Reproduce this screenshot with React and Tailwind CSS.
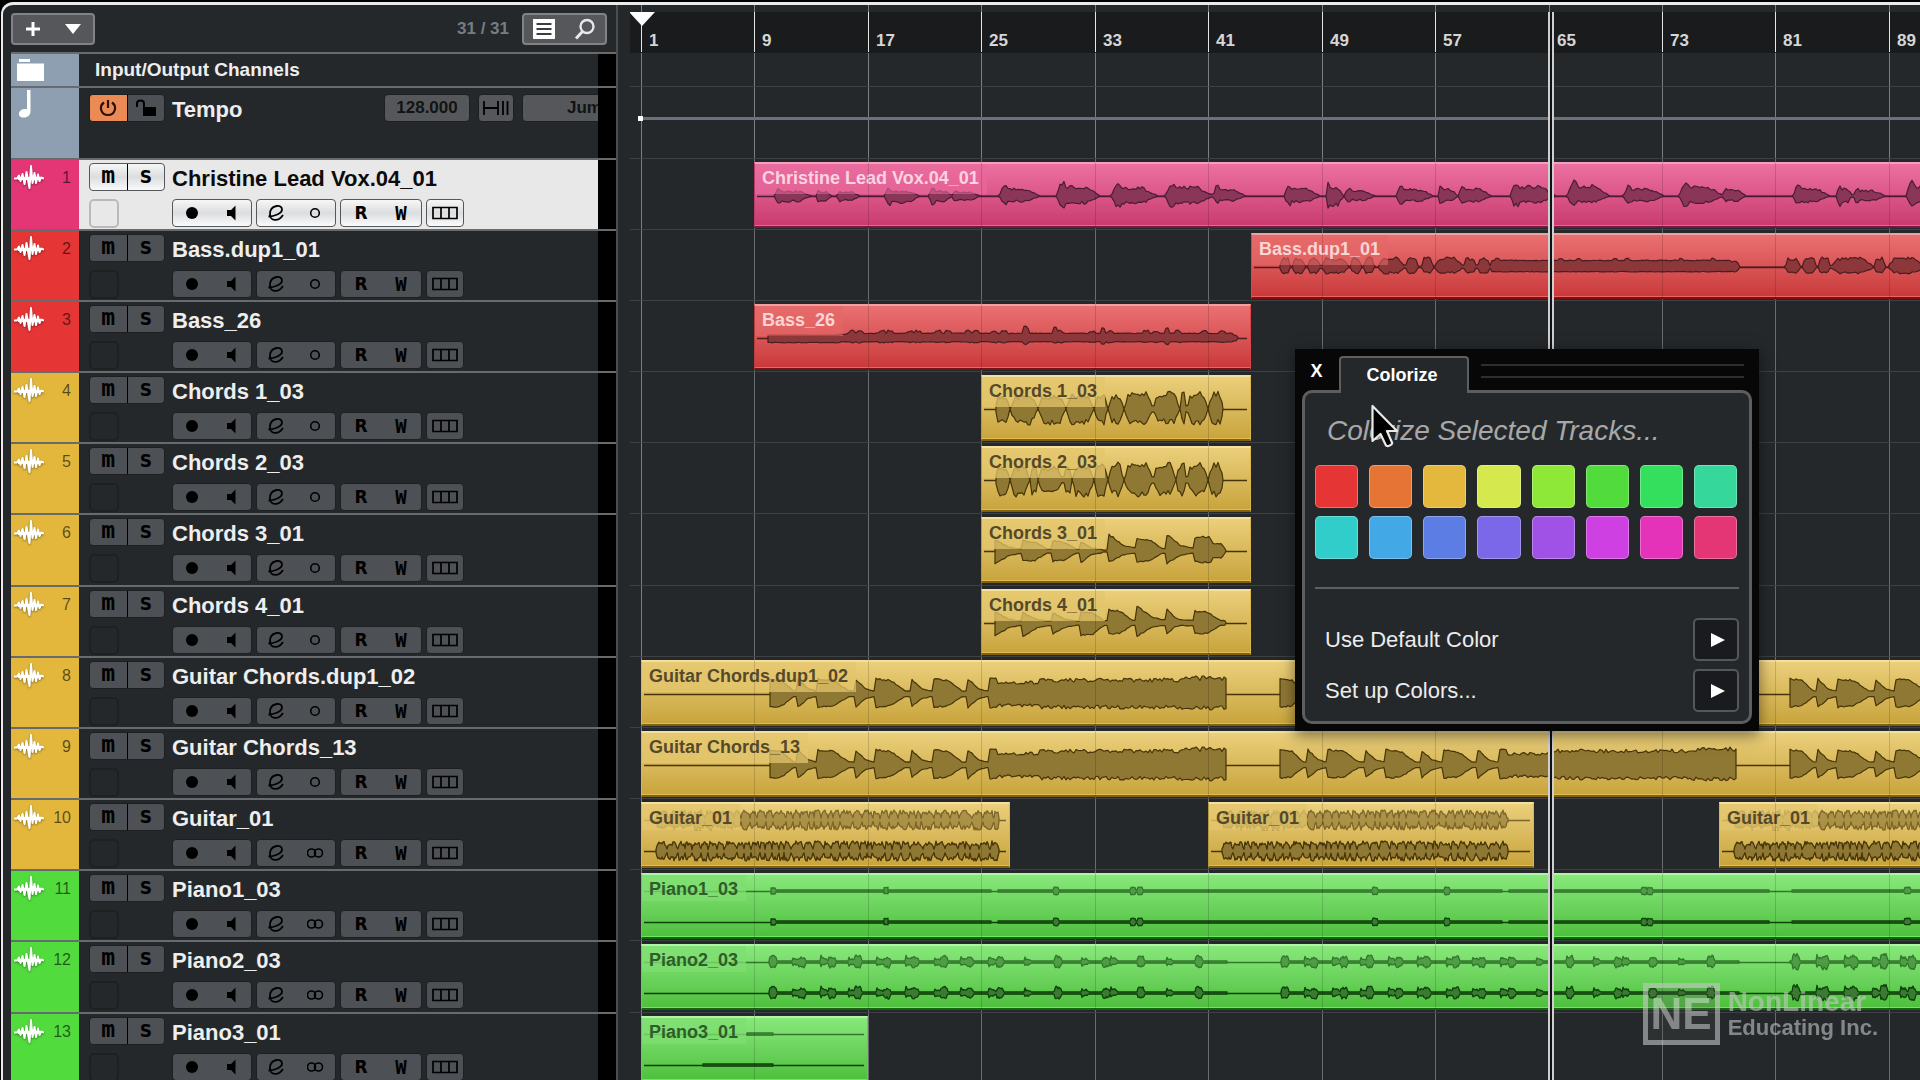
import { Fragment } from 'react';
import clsx from 'clsx';

const PX_PER_BAR = 14.18;
const ORIGIN = 11; // left margin of the arrange area before bar 1

const barX = (bar) => Math.round(ORIGIN + (bar - 1) * PX_PER_BAR);

const bars = [1, 9, 17, 25, 33, 41, 49, 57, 65, 73, 81, 89];

// Every sixth row takes one pixel more, in the list and in the lanes alike
const rowHeight = (i) => (i % 6 === 5 ? 'h-[72px]' : 'h-[71px]');

const palette = {
  pink: {
    strip: 'bg-[#e43675]',
    event: 'from-[#ec70a2] to-[#c93a6e] border-t-[#f29fc0] border-l-[#e0427d] border-r-[#e0427d] border-b-[#7e1440]',
    glow: 'border-[#f0619a]',
    label: 'text-[#fbd3e2]',
    veil: 'bg-[#e9699c]/60',
    wave: 'fill-[#8a3659] stroke-[#4b1c38]',
  },
  red: {
    strip: 'bg-[#e63535]',
    event: 'from-[#ea7072] to-[#c9383a] border-t-[#f0a09f] border-l-[#dd4646] border-r-[#dd4646] border-b-[#7c1113]',
    glow: 'border-[#ee6364]',
    label: 'text-[#fbd5d3]',
    veil: 'bg-[#e46767]/60',
    wave: 'fill-[#8c373a] stroke-[#4c1d20]',
  },
  yellow: {
    strip: 'bg-[#e2b73c]',
    event: 'from-[#ebcf7a] to-[#c8a43b] border-t-[#f3dfa0] border-l-[#d9b54c] border-r-[#d9b54c] border-b-[#83600c]',
    glow: 'border-[#e2bd55]',
    label: 'text-[#55492b]',
    veil: 'bg-[#e3c56c]/75',
    wave: 'fill-[#8f7734] stroke-[#463508]',
  },
  green: {
    strip: 'bg-[#52db3c]',
    event: 'from-[#88e87b] to-[#4ebf3d] border-t-[#b0f5a6] border-l-[#5ed24e] border-r-[#5ed24e] border-b-[#12670a]',
    glow: 'border-[#6fe75e]',
    label: 'text-[#2f5d2a]',
    veil: 'bg-[#7fde72]/75',
    wave: 'fill-[#3a7a33] stroke-[#0c4208]',
  },
};

// Repeatable noise, so the wave forms look the same on every render
const noise = (n) => {
  const v = Math.sin(n * 12.9898 + 4.1) * 43758.5453;
  return v - Math.floor(v);
};

const shapes = {
  pluck: (t) => (t < 0.5 ? 1 - t * 1.3 : Math.max(0.2, 0.35 - (t - 0.5) * 0.4)),
  swell: (t) => (t < 0.42 ? 1 - t * 0.25 : Math.max(0.2, 0.9 - (t - 0.42) * 1.7)),
  blob: (t) => Math.min(1, t * 5 + 0.25, (1 - t) * 4 + 0.2),
  voice: (t) => (t < 0.08 ? t * 9 : t < 0.22 ? 1 : t < 0.7 ? 0.68 : Math.max(0.1, 0.68 - (t - 0.7) * 2)),
  flat: () => 1,
};

// segment = [start, end, shape, up, down, roughness]
// Overlapping segments merge into one outline: the loudest one wins.
function wavePath(segs, mid, step) {
  const end = Math.max(...segs.map((s) => s[1]));
  const start = Math.min(...segs.map((s) => s[0]));
  const top = [];
  const bottom = [];
  for (let x = start; x <= end; x += step) {
    let a = 0;
    let b = 0;
    segs.forEach(([s, e, shape, up, down, rough = 0.15]) => {
      if (x < s || x > e) return;
      const k = shapes[shape]((x - s) / (e - s));
      a = Math.max(a, up * k * (1 - rough * noise(x + up)));
      b = Math.max(b, down * k * (1 - rough * noise(x * 1.7 + down)));
    });
    top.push(`${x} ${(mid - a).toFixed(1)}`);
    bottom.unshift(`${x} ${(mid + b).toFixed(1)}`);
  }
  return `M${start} ${mid}L${top.join('L')}L${end} ${mid}L${bottom.join('L')}Z`;
}

const voiceSegs = [
  [20, 56, 8, 9], [62, 77, 7, 8], [83, 105, 7, 7], [130, 165, 8, 11], [175, 198, 8, 9], [198, 225, 6, 7],
  [245, 285, 12, 9], [302, 345, 16, 12], [357, 402, 14, 12], [411, 458, 15, 12], [459, 490, 11, 8],
  [530, 565, 12, 10], [572, 589, 14, 16], [590, 620, 8, 7], [642, 678, 11, 9], [684, 703, 11, 9],
  [704, 736, 12, 9], [756, 800, 16, 11], [813, 854, 17, 10], [869, 909, 12, 9], [925, 968, 15, 11],
  [969, 991, 11, 8], [1039, 1074, 12, 10], [1083, 1098, 12, 11], [1099, 1130, 9, 7], [1152, 1190, 16, 11],
].map(([s, e, u, d]) => [s, e, 'voice', u, d, 0.35]);

const bassSegs = [
  ...[[29, 39], [42, 54], [57, 69], [71, 97], [100, 110], [113, 123], [128, 153], [155, 167], [171, 182], [184, 211],
    [213, 225], [227, 239], [535, 549], [552, 565], [568, 579], [581, 621], [624, 634], [638, 672]]
    .map(([s, e]) => [s, e, 'blob', 10, 7, 0.35]),
  [241, 480, 'flat', 7, 5, 0.12],
  [480, 488, 'blob', 6, 5, 0.1],
  ...[244, 308, 326, 362, 374, 428, 460].map((x) => [x, x + 4, 'flat', 9, 5, 0.1]),
];

const bass26Segs = [
  [14, 86, 'flat', 3, 5, 0.15],
  [86, 106, 'flat', 4, 4, 0.15],
  [94, 478, 'flat', 5, 4, 0.12],
  [476, 484, 'blob', 3, 3, 0.1],
  ...[98, 106, 128, 136, 156, 164, 184, 194, 214, 222, 240, 250, 306, 338, 356, 392, 402, 424, 450, 468]
    .map((x) => [x - 4, x + 4, 'blob', 8, 5, 0.25]),
  [268, 275, 'blob', 14, 7, 0.2],
  [298, 304, 'blob', 11, 5, 0.2],
  [346, 351, 'blob', 12, 7, 0.2],
  [410, 416, 'blob', 12, 7, 0.2],
];

const strum = (cuts, up, down) => cuts.slice(1).map((c, i) => [cuts[i] + 1, c - 1, 'blob', up + (i > 5 ? 3 : 0), down, 0.4]);
const chords1 = strum([14, 29, 57, 85, 113, 127, 143, 172, 199, 206, 227, 243], 15, 16);
const chords2 = strum([14, 29, 49, 57, 82, 91, 113, 127, 143, 172, 195, 206, 227, 243], 15, 17);

const chords3 = [
  [14, 42, 'pluck', 12, 14], [42, 71, 'swell', 11, 11], [71, 100, 'swell', 11, 11], [100, 120, 'pluck', 10, 12],
  [120, 128, 'flat', 1, 1], [128, 156, 'pluck', 18, 12], [156, 186, 'swell', 13, 12], [186, 213, 'pluck', 17, 13],
  [213, 228, 'flat', 15, 12], [228, 245, 'voice', 12, 11],
];
const chords4 = [
  [14, 42, 'pluck', 12, 14], [42, 71, 'pluck', 11, 14], [71, 100, 'pluck', 11, 12], [100, 128, 'swell', 12, 13],
  [128, 156, 'swell', 14, 12], [156, 185, 'pluck', 18, 14], [185, 203, 'pluck', 16, 12], [203, 213, 'flat', 3, 3],
  [213, 245, 'swell', 13, 12],
];

const riff = (at) => [
  ...[[0, 28, 'swell'], [28, 48, 'pluck'], [48, 85, 'swell'], [85, 106, 'pluck'], [106, 141, 'swell'],
    [141, 163, 'pluck'], [163, 198, 'swell'], [198, 219, 'pluck']]
    .map(([s, e, k]) => [at + s, at + e, k, 16, 14, 0.12]),
  [at + 219, at + 226, 'flat', 17, 14, 0.1],
  [at + 226, at + 270, 'flat', 13, 13, 0.25],
  [at + 270, at + 410, 'flat', 16, 15, 0.25],
  [at + 410, at + 456, 'flat', 18, 16, 0.25],
];
const guitarTakes = [riff(129), riff(639), riff(1149)];

const chug = (from, to, seed) => {
  const out = [];
  let x = from;
  let i = seed;
  while (x < to) {
    const w = 5 + Math.floor(noise(i++) * 5) * 2;
    out.push([x, Math.min(x + w, to), 'blob', 10, 10, 0.45]);
    x += w;
  }
  return out;
};

const bumps = (xs, up, down) =>
  xs.map((x, i) => [x - 3, x + 5, i % 2 ? 'voice' : 'blob', up - (i % 3), down - (i % 2), 0.4]);
const hits = [131, 154, 160, 182, 190, 210, 216, 238, 245, 267, 273, 296, 302, 322, 328, 350, 358, 386, 416, 443, 464, 472, 499, 528, 557];
const hitsB = hits.map((x) => x + 512).filter((x) => x < 1100);
const hitsC = [1154, 1178, 1183, 1206, 1212, 1234, 1242, 1262, 1270];
const piano2 = [
  [[130, 586, 'flat', 1, 1, 0], ...bumps(hits, 7, 6)],
  [[640, 1098, 'flat', 1, 1, 0], ...bumps(hitsB, 7, 6)],
  [[1149, 1290, 'flat', 1, 1, 0], ...bumps(hitsC, 9, 8)],
];
const dots = [245, 415, 492, 499, 734, 806, 1003, 1009];
const piano1 = [
  [[130, 350, 'flat', 1, 1, 0], [130, 134, 'flat', 3, 3, 0]],
  [[357, 861, 'flat', 1, 1, 0], ...dots.filter((x) => x > 357 && x < 861).map((x) => [x - 2, x + 2, 'flat', 4, 4, 0.2])],
  [[243, 247, 'flat', 4, 3, 0.2]],
  [[868, 1128, 'flat', 1, 1, 0], ...dots.filter((x) => x > 868).map((x) => [x - 2, x + 2, 'flat', 4, 4, 0.2])],
  [[1151, 1290, 'flat', 1, 1, 0], [1264, 1269, 'flat', 4, 3, 0.2]],
];

// events: ch holds one list of takes per audio channel
const tracks = [
  { name: 'Christine Lead Vox.04_01', color: 'pink', selected: true, events: [{ from: 9, to: 93, ch: [[voiceSegs]] }] },
  { name: 'Bass.dup1_01', color: 'red', events: [{ from: 44, to: 93, ch: [[bassSegs]] }] },
  { name: 'Bass_26', color: 'red', events: [{ from: 9, to: 44, ch: [[bass26Segs]] }] },
  { name: 'Chords 1_03', color: 'yellow', events: [{ from: 25, to: 44, ch: [[chords1]] }] },
  { name: 'Chords 2_03', color: 'yellow', events: [{ from: 25, to: 44, ch: [[chords2]] }] },
  { name: 'Chords 3_01', color: 'yellow', events: [{ from: 25, to: 44, ch: [[chords3]] }] },
  { name: 'Chords 4_01', color: 'yellow', events: [{ from: 25, to: 44, ch: [[chords4]] }] },
  { name: 'Guitar Chords.dup1_02', color: 'yellow', events: [{ from: 1, to: 93, ch: [guitarTakes] }] },
  { name: 'Guitar Chords_13', color: 'yellow', events: [{ from: 1, to: 93, ch: [guitarTakes] }] },
  {
    name: 'Guitar_01', color: 'yellow', stereo: true,
    events: [
      { from: 1, to: 27, ch: [[chug(15, 358, 3)], [chug(15, 358, 8)]] },
      { from: 41, to: 64, ch: [[chug(14, 300, 3)], [chug(14, 300, 8)]] },
      { from: 77, to: 93, ch: [[chug(15, 220, 3)], [chug(15, 220, 8)]] },
    ],
  },
  { name: 'Piano1_03', color: 'green', stereo: true, events: [{ from: 1, to: 93, ch: [piano1, piano1] }] },
  { name: 'Piano2_03', color: 'green', stereo: true, events: [{ from: 1, to: 93, ch: [piano2, piano2] }] },
  {
    name: 'Piano3_01', color: 'green', stereo: true,
    events: [{ from: 1, to: 17, ch: [[[[106, 132, 'flat', 1, 1, 0]]], [[[62, 132, 'flat', 1, 1, 0]]]] }],
  },
];

const swatches = [
  'bg-[#e63535]', 'bg-[#e67535]', 'bg-[#e4b83c]', 'bg-[#d5e84d]', 'bg-[#8ee838]', 'bg-[#52db3c]', 'bg-[#35df5e]', 'bg-[#35d79a]',
  'bg-[#30cdca]', 'bg-[#42a8e6]', 'bg-[#5b7de4]', 'bg-[#7b68e8]', 'bg-[#a052e6]', 'bg-[#cf40e2]', 'bg-[#e433b8]', 'bg-[#e43675]',
];

function WaveIcon() {
  return (
    <svg viewBox="0 0 30 26" className="w-[30px] h-[26px] drop-shadow-[0_1px_1px_rgba(0,0,0,0.4)]" fill="none" stroke="white" strokeWidth="2" strokeLinejoin="round">
      <path d="M0 14.500H3L5 11.500L6.500 17L8.500 10L10.500 20L12.500 8L14 16L15.500 24L17 2L18.500 19L20.500 9L22 19L24 10.500L25.500 17L27 13.500L30 14.500" />
      <path d="M4 14.500H27" strokeWidth="3" />
    </svg>
  );
}

function Group({ selected, className, children }) {
  return (
    <div
      className={clsx(
        'flex h-[28px] rounded-[4px] border text-black',
        selected
          ? 'border-[#55585a] bg-linear-to-b from-[#f7f7f7] via-[#dcdddf] to-[#fafafa]'
          : 'border-[#1d1f21] bg-[#4d5054]',
        className,
      )}
    >
      {children}
    </div>
  );
}

const iconButton = 'flex flex-1 items-center justify-center';
const monoGlyph = 'font-["DejaVu_Sans_Mono",monospace] font-bold leading-none';
const wideGlyph = 'font-["DejaVu_Sans",sans-serif] font-bold text-[17px] leading-none';

function TrackControls({ selected, stereo }) {
  return (
    <div className="flex gap-1">
      <Group selected={selected} className="w-[80px]">
        <button aria-label="Record enable" className={iconButton}>
          <svg viewBox="0 0 14 14" className="size-[14px]"><circle cx="6" cy="7" r="6" /></svg>
        </button>
        <button aria-label="Monitor" className={iconButton}>
          <svg viewBox="0 0 14 16" className="w-[14px] h-4"><path d="M2 5H6L10.500 0.500V15.500L6 11H2Z" /></svg>
        </button>
      </Group>
      <Group selected={selected} className="w-[80px]">
        <button aria-label="Edit channel" className={iconButton}>
          <svg viewBox="0 0 18 18" className="size-[18px]" fill="none" stroke="currentColor" strokeWidth="1.8">
            <path d="M0.500 12.500C6 12.500 14 9.500 14 5.500C14 2.500 11.500 1.500 8.500 2C4 3 1.500 6.500 2 11C2.500 16.500 10 18.500 15 11" />
          </svg>
        </button>
        <button aria-label="Channel format" className={iconButton}>
          <svg viewBox="0 0 18 12" className="w-[18px] h-[12px]" fill="none" stroke="currentColor" strokeWidth="1.6">
            {stereo ? (
              <>
                <circle cx="4.500" cy="6" r="4" />
                <circle cx="11.500" cy="6" r="4" />
              </>
            ) : (
              <circle cx="8" cy="6" r="4.300" />
            )}
          </svg>
        </button>
      </Group>
      <Group selected={selected} className="w-[82px]">
        <button aria-label="Read automation" className={clsx(iconButton, wideGlyph)}>R</button>
        <button aria-label="Write automation" className={clsx(iconButton, monoGlyph, 'text-[19px]')}>W</button>
      </Group>
      <Group selected={selected} className="w-[38px]">
        <button aria-label="Lanes" className={iconButton}>
          <svg viewBox="0 0 26 14" className="w-[26px] h-[14px]" fill="none" stroke="currentColor" strokeWidth="1.7">
            <path d="M1 1.500H25V12.500H1ZM9 1.500V12.500M17 1.500V12.500" />
          </svg>
        </button>
      </Group>
    </div>
  );
}

function TrackHeader({ track, index }) {
  const { name, color, selected, stereo } = track;
  return (
    <li className={clsx('flex shrink-0 border-t-2 border-[#686b6d]', rowHeight(index))}>
      <div className={clsx('flex w-[68px] shrink-0 items-start justify-between pl-[3px] pr-2 pt-1', palette[color].strip)}>
        <WaveIcon />
        <span className="pt-1 text-[16px] leading-5 text-black/60">{index + 1}</span>
      </div>
      <div className={clsx('grid flex-1 grid-cols-[83px_1fr] content-start gap-y-[6px] pl-[10px] pt-[3px]', selected ? 'bg-[#e8e8e8]' : 'bg-[#25282b]')}>
        <Group selected={selected} className="w-[76px]">
          <button aria-label="Mute" className={clsx(iconButton, monoGlyph, 'border-r border-black pb-1 text-[23px]')}>m</button>
          <button aria-label="Solo" className={clsx(iconButton, wideGlyph)}>S</button>
        </Group>
        <h2 className={clsx('pt-[2px] text-[22px] font-bold leading-7', selected ? 'text-[#0c0c0c]' : 'text-[#eeeeee]')}>{name}</h2>
        <button
          aria-label="Track color"
          className={clsx('h-[29px] w-[30px] rounded-[5px] border-2', selected ? 'border-[#b9babb]' : 'border-[#1e2022]')}
        />
        <TrackControls selected={selected} stereo={stereo} />
      </div>
      <div className="w-[18px] bg-black" />
    </li>
  );
}

function TrackList() {
  return (
    <section className="flex w-[607px] shrink-0 flex-col border-r-2 border-[#4b4e51]">
      <div className="flex h-[47px] shrink-0 items-center justify-between pr-[9px]">
        <div className="flex h-8 w-[84px] rounded-[4px] border-2 border-[#808285] bg-[#55575a] text-white">
          <button aria-label="Add track" className={iconButton}>
            <svg viewBox="0 0 14 14" className="size-[14px]" stroke="currentColor" strokeWidth="3"><path d="M7 0V14M0 7H14" /></svg>
          </button>
          <button aria-label="Track presets" className={iconButton}>
            <svg viewBox="0 0 16 10" className="w-4 h-[10px]" fill="currentColor"><path d="M0 0H16L8 10Z" /></svg>
          </button>
        </div>
        <div className="flex items-center gap-[13px]">
          <span className="text-[17px] font-bold text-[#747d85]">31 / 31</span>
          <div className="flex h-8 w-[85px] rounded-[4px] border-2 border-[#808285] bg-[#55575a] text-white">
            <button aria-label="Track visibility" className={iconButton}>
              <svg viewBox="0 0 22 20" className="w-[22px] h-5">
                <rect width="22" height="20" fill="white" />
                <path d="M3.500 5H18.500M3.500 10H18.500M3.500 15H18.500" stroke="#3c3e40" strokeWidth="2" />
              </svg>
            </button>
            <button aria-label="Find tracks" className={iconButton}>
              <svg viewBox="0 0 22 22" className="size-[22px]" fill="none" stroke="#e8e8e8" strokeWidth="2.4">
                <circle cx="13" cy="8.500" r="6.500" />
                <path d="M8.500 13.500L2 20.500" strokeWidth="3" />
              </svg>
            </button>
          </div>
        </div>
      </div>

      <ul className="flex flex-col">
        <li className="flex h-[34px] shrink-0 border-t-2 border-[#686b6d]">
          <div className="w-[68px] bg-[#8d9fb0] pl-[6px] pt-[5px]">
            <svg viewBox="0 0 28 24" className="w-[28px] h-6" fill="white"><path d="M2 0H13V3H2ZM0 4.500H27V22H0Z" /></svg>
          </div>
          <h2 className="flex-1 pl-4 pt-px text-[19px] font-bold leading-[30px] text-[#eeeeee]">Input/Output Channels</h2>
          <div className="w-[18px] bg-black" />
        </li>
        <li className="flex h-[72px] shrink-0 border-t-2 border-[#686b6d]">
          <div className="w-[68px] shrink-0 bg-[#8d9fb0] pl-2 pt-[2px]">
            <svg viewBox="0 0 18 28" className="w-[18px] h-7" fill="white"><path d="M8 0H11.500V21C11.500 25 9 27.500 5 27.500C1.500 27.500 -0.500 26 0 23C0.500 20 4.500 18 8 19.500Z" /></svg>
          </div>
          <div className="flex min-w-0 flex-1 items-start overflow-hidden pl-[10px] pt-[6px]">
            <div className="flex h-[28px] w-[76px] shrink-0 overflow-hidden rounded-[4px] border border-[#1d1f21] bg-[#4d5054]">
              <button aria-label="Activate tempo track" className={clsx(iconButton, 'border-r border-black bg-[#ec8a55]')}>
                <svg viewBox="0 0 18 18" className="size-[18px]" fill="none" stroke="#2b1307" strokeWidth="2.2">
                  <path d="M9 1V9M5 3.500C-0.500 7.500 2 16 9 16C16 16 18.500 7.500 13 3.500" />
                </svg>
              </button>
              <button aria-label="Lock" className={iconButton}>
                <svg viewBox="0 0 22 18" className="w-[22px] h-[18px]">
                  <path d="M8 8H21V17H8Z" />
                  <path d="M2 8V4.500C2 0.500 9 0.500 9 4.500V9" fill="none" stroke="black" strokeWidth="2" />
                </svg>
              </button>
            </div>
            <h2 className="ml-[7px] w-[212px] shrink-0 pt-[2px] text-[22px] font-bold leading-7 text-[#eeeeee]">Tempo</h2>
            <button className="h-[28px] w-[86px] shrink-0 rounded-[4px] border border-[#1d1f21] bg-[#55575a] text-[17px] font-bold leading-6 text-black/80">128.000</button>
            <button aria-label="Time base" className="ml-2 flex h-[28px] w-9 shrink-0 items-center justify-center rounded-[4px] border border-[#1d1f21] bg-[#55575a]">
              <svg viewBox="0 0 26 16" className="w-[26px] h-4" fill="none" stroke="black" strokeWidth="1.8"><path d="M1 1V15M1 8H15M15 1V15M20 1V15M24.500 1V15" /></svg>
            </button>
            <button className="ml-2 h-[28px] w-[140px] shrink-0 rounded-[4px] border border-[#1d1f21] bg-[#55575a] pl-[44px] text-left text-[17px] font-bold leading-6 text-black/80">Jump</button>
          </div>
          <div className="w-[18px] shrink-0 bg-black" />
        </li>
        {tracks.map((t, i) => (
          <TrackHeader key={t.name} track={t} index={i} />
        ))}
      </ul>
    </section>
  );
}

function AudioEvent({ name, color, event, stereo }) {
  const c = palette[color];
  const width = barX(event.to) - barX(event.from);
  const mids = stereo ? [16, 47] : [32];
  return (
    <article
      className={clsx('absolute top-[3px] h-[66px] overflow-hidden border-t-2 border-r border-b-2 border-l bg-linear-to-b', c.event)}
      style={{ left: barX(event.from), width }}
    >
      <svg width={width} height="64" className="absolute -left-px top-0">
        {mids.map((mid, i) => (
          <g key={mid} className={clsx(c.wave, stereo && i === 0 && 'opacity-65')}>
            <path d={`M3 ${mid}.5H${width - 4}`} strokeWidth="1.5" fill="none" />
            {event.ch[i].map((take, k) => (
              <path key={k} d={wavePath(take, mid, stereo ? 1 : 2)} strokeWidth={stereo ? 1.3 : 1.2} strokeLinejoin="round" />
            ))}
          </g>
        ))}
      </svg>
      <h3 className={clsx('absolute left-0 top-0 pl-[7px] pr-2 text-[18px] font-bold leading-[28px]', stereo ? 'h-[26px]' : 'h-[30px]', c.label, c.veil)}>
        {name}
      </h3>
      <div className={clsx('absolute inset-x-0 bottom-0 border-b', c.glow)} />
    </article>
  );
}

function Arrange() {
  return (
    <section className="relative ml-3 min-w-0 flex-1 overflow-hidden">
      {/* Bar lines */}
      {bars.map((b) => (
        <div key={b} className="absolute inset-y-0 w-px bg-[#7c7f81]" style={{ left: barX(b) }} />
      ))}

      <header className="relative mt-[7px] h-[41px] bg-[#1a1b1d]">
        {bars.map((b) => (
          <Fragment key={b}>
            <div className="absolute top-0 h-10 w-px bg-[#e4e4e4]" style={{ left: barX(b) }} />
            <span className="absolute top-[19px] pl-2 text-[17px] font-bold leading-5 text-[#d6d6d6]" style={{ left: barX(b) }}>{b}</span>
          </Fragment>
        ))}
        <svg viewBox="0 0 26 14" className="absolute -left-px top-0 h-[14px] w-[26px]" fill="white"><path d="M0 0H26L13 14Z" /></svg>
      </header>

      <div className="h-[33px]" />
      <div className="relative h-[72px] border-t border-[#43474a]/80">
        <div className="absolute left-[10px] right-0 top-[30px] h-[3px] bg-[#69727c]" />
        <div className="absolute left-2 top-[29px] size-[5px] bg-white" />
      </div>

      {tracks.map((t, i) => (
        <div key={t.name} className={clsx('relative border-t border-[#43474a]/80', rowHeight(i))}>
          {t.events.map((e) => (
            <AudioEvent key={e.from} name={t.name} color={t.color} event={e} stereo={t.stereo} />
          ))}
        </div>
      ))}

      {bars.slice(1).map((b) => (
        <div key={b} className="absolute bottom-0 top-[153px] w-px bg-black/15" style={{ left: barX(b) }} />
      ))}

      {/* Playhead */}
      <div className="absolute bottom-0 top-[7px] -ml-px w-[6px] border-x-2 border-[#cfcfcf] bg-[#101112]" style={{ left: barX(65) }} />
    </section>
  );
}

function ColorizePanel() {
  return (
    <aside role="dialog" aria-label="Colorize" className="absolute left-[1295px] top-[349px] w-[464px] bg-[#070707] p-[7px] shadow-[0_4px_14px_rgba(0,0,0,0.5)]">
      <div className="flex h-[34px]">
        <button aria-label="Close" className="w-[37px] pb-1 pr-2 text-[18px] font-bold leading-none text-white">X</button>
        <div className="relative z-10 h-[37px] w-[130px] rounded-t-[4px] border-2 border-b-0 border-[#5c5e60] bg-[#25282b] pr-1 pt-[3px] text-center text-[18px] font-bold leading-7 text-white">
          Colorize
        </div>
        <div className="ml-3 mr-2 mt-2 h-[14px] flex-1 border-y-2 border-[#2e2e2e]" />
      </div>
      <div className="rounded-[10px] border-[3px] border-[#5c5e60] bg-[#25282b] px-[10px] pb-[9px] pt-5">
        <h2 className="pl-3 text-[28px] italic leading-[36px] text-[#a6a8a9]">Colorize Selected Tracks...</h2>
        <div className="mr-[2px] mt-4 grid grid-cols-8 gap-x-[11px] gap-y-2">
          {swatches.map((s) => (
            <button key={s} aria-label="Color" className={clsx('h-[43px] rounded-[5px] border border-white/30', s)} />
          ))}
        </div>
        <hr className="mt-7 border-t-2 border-[#5c5e60]" />
        {['Use Default Color', 'Set up Colors...'].map((text, i) => (
          <div key={text} className={clsx('flex items-center justify-between pl-[10px]', i === 0 ? 'mt-[29px]' : 'mt-2')}>
            <span className="text-[22px] leading-7 text-[#ececec]">{text}</span>
            <button aria-label={text} className="flex h-[43px] w-[46px] items-center justify-center rounded-[5px] border-2 border-[#55575a] bg-[#1a1b1e] pl-1">
              <svg viewBox="0 0 14 14" className="size-[14px]" fill="white"><path d="M0 0L14 7L0 14Z" /></svg>
            </button>
          </div>
        ))}
      </div>
      <svg viewBox="0 0 28 44" className="absolute left-[76px] top-[55px] h-11 w-7">
        <path d="M1.500 2V37L9.500 30L15 41.500C16 43 22 41 21 38.500L16 27H26Z" fill="black" stroke="#e9e9e9" strokeWidth="2.200" strokeLinejoin="round" />
      </svg>
    </aside>
  );
}

function Watermark() {
  return (
    <div className="absolute bottom-[35px] right-[42px] flex items-center gap-2 text-[#c4c7c4] opacity-60">
      <div className="flex h-[62px] w-[77px] items-center justify-center border-[5px] border-current bg-[#4c504c]/40 text-[44px] font-bold leading-none">NE</div>
      <div>
        <p className="text-[28px] font-bold leading-7">NonLinear</p>
        <p className="text-[22px] font-bold leading-6">Educating Inc.</p>
      </div>
    </div>
  );
}

export default function App() {
  return (
    <div className='relative h-screen overflow-hidden bg-black pl-px pt-[2px] font-["Liberation_Sans",Arial,sans-serif]'>
      <main className="flex h-full overflow-hidden rounded-tl-[12px] border-l-2 border-t-[3px] border-[#ebe9e9] bg-[#25282b] pl-2">
        <TrackList />
        <Arrange />
      </main>
      <ColorizePanel />
      <Watermark />
    </div>
  );
}
